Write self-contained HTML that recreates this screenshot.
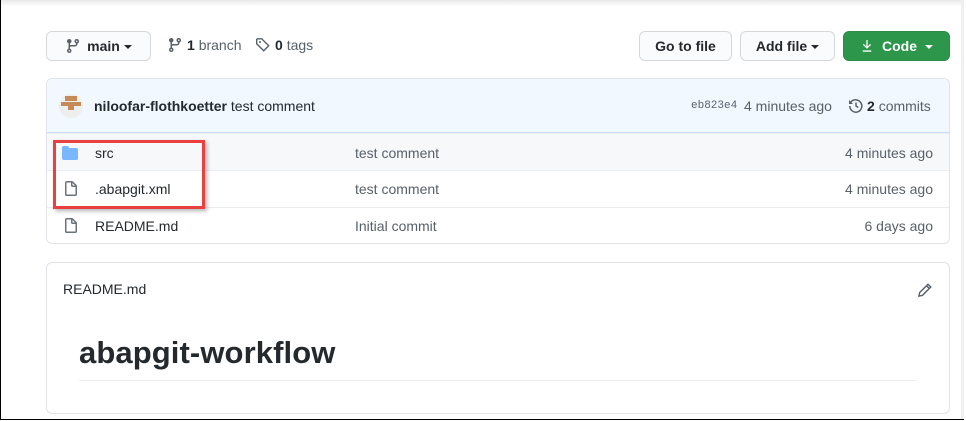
<!DOCTYPE html><html><head><style>
body{margin:0;width:966px;height:421px;overflow:hidden;font-family:"Liberation Sans",sans-serif;color:#24292e;font-size:14px;background:#fff;position:relative}
.frame{position:absolute;left:0;top:0;width:964px;height:420px;border-left:1px solid #000;border-bottom:1px solid #000;border-right:2px solid #000;box-sizing:border-box;background:linear-gradient(#e8e8e8,#fff 6px)}
.sb{position:absolute;right:2px;top:0;width:3px;height:419px;background:#f0f0f0}
.btn{position:absolute;top:31px;height:30px;border:1px solid #d5d8da;border-radius:6px;background:#fafbfc;box-sizing:border-box;font-weight:bold;font-size:14px;line-height:28px;text-align:center}
.a{position:absolute;white-space:nowrap}
.box{position:absolute;left:46px;top:78px;width:904px;height:166px;border:1px solid #e1e4e8;border-radius:6px;box-sizing:border-box;overflow:hidden}
.hd{height:53px;background:#f1f8ff;border-bottom:1px solid #c8e1ff}
.row{height:36px;border-top:1px solid #eaecef;position:relative}
.row:first-of-type{border-top:none}
.caret{display:inline-block;border:4px solid transparent;border-top-color:currentColor;border-bottom:0;vertical-align:middle;margin-left:4px}
.gray{color:#586069}
</style></head><body>
<div class="frame"></div><div class="sb"></div>
<div class="btn" style="left:46px;width:105px"><svg width="16" height="16" viewBox="0 0 16 16" style="vertical-align:-3px;margin-right:6px"><path fill="#586069" d="M11.75 2.5a.75.75 0 100 1.5.75.75 0 000-1.5zm-2.25.75a2.25 2.25 0 113 2.12V6A2.5 2.5 0 0110 8.5H6a1 1 0 00-1 1v1.130a2.25 2.25 0 11-1.5 0V5.37a2.25 2.25 0 111.5 0v1.84c.31-.14.65-.21 1-.21h4a1 1 0 001-1v-.63A2.25 2.25 0 019.5 3.25zM4.25 12a.75.75 0 100 1.5.75.75 0 000-1.5zM3.5 3.25a.75.75 0 111.5 0 .75.75 0 01-1.5 0z"/></svg>main<span class="caret"></span></div>
<div class="a" style="left:167px;top:37px"><svg width="16" height="16" viewBox="0 0 16 16" style="vertical-align:-3px;margin-right:4px"><path fill="#586069" d="M11.75 2.5a.75.75 0 100 1.5.75.75 0 000-1.5zm-2.25.75a2.25 2.25 0 113 2.12V6A2.5 2.5 0 0110 8.5H6a1 1 0 00-1 1v1.13a2.25 2.25 0 11-1.5 0V5.37a2.25 2.25 0 111.5 0v1.84c.31-.14.65-.21 1-.21h4a1 1 0 001-1v-.63A2.25 2.25 0 019.5 3.25zM4.25 12a.75.75 0 100 1.5.75.75 0 000-1.5zM3.5 3.25a.75.75 0 111.5 0 .75.75 0 01-1.5 0z"/></svg><b>1</b> <span class="gray">branch</span></div>
<div class="a" style="left:255px;top:37px"><svg width="16" height="16" viewBox="0 0 16 16" style="vertical-align:-3px;margin-right:4px"><path fill="none" stroke="#586069" stroke-width="1.4" d="M1.7 2.5v4.3l7 7 5-5-7-7H2.5z"/><circle cx="5" cy="5" r="1" fill="#586069"/></svg><b>0</b> <span class="gray">tags</span></div>
<div class="btn" style="left:639px;width:93px">Go to file</div>
<div class="btn" style="left:740px;width:95px">Add file<span class="caret"></span></div>
<div class="btn" style="left:843px;width:107px;background:#2c974b;border-color:#2a8c46;color:#fff"><svg width="14" height="14" viewBox="0 0 16 16" style="vertical-align:-2px;margin-right:8px"><path fill="#fff" d="M7.47 10.78a.75.75 0 001.06 0l3.75-3.750a.75.75 0 00-1.06-1.06L8.75 8.44V1.75a.75.75 0 00-1.5 0v6.69L4.78 5.97a.75.75 0 00-1.06 1.06l3.75 3.75zM3.75 13a.75.75 0 000 1.5h8.5a.75.75 0 000-1.5h-8.5z"/></svg>Code<span class="caret" style="margin-left:8px"></span></div>
<div class="box">
<div class="hd"></div>
<div class="row" style="background:#f6f8fa"></div><div class="row"></div><div class="row"></div>
</div>
<div class="a" style="left:59px;top:94px;width:24px;height:24px;border-radius:50%;background:#eee;overflow:hidden"><div style="position:absolute;left:6px;top:2px;width:12px;height:5px;background:#c58a55"></div><div style="position:absolute;left:2px;top:8px;width:20px;height:4px;background:#c58a55"></div><div style="position:absolute;left:9px;top:12px;width:6px;height:4px;background:#c58a55"></div></div>
<div class="a" style="left:94px;top:98px"><b>niloofar-flothkoetter</b> test comment</div>
<div class="a gray" style="left:691px;top:100px;font-family:'Liberation Mono',monospace;font-size:11px">eb823e4</div>
<div class="a gray" style="left:744px;top:98px">4 minutes ago</div>
<div class="a" style="left:848px;top:98px"><svg width="16" height="16" viewBox="0 0 16 16" style="vertical-align:-3px;margin-right:3px"><path fill="none" stroke="#586069" stroke-width="1.5" d="M2.5 4.5A6.2 6.2 0 118 14.2 6.2 6.2 0 011.8 8"/><path fill="#586069" d="M1 2v4h4z"/><path fill="none" stroke="#586069" stroke-width="1.5" d="M8 4.5V8l2.3 1.5"/></svg><b>2</b> <span class="gray">commits</span></div>
<svg class="a" style="left:62px;top:145px" width="16" height="16" viewBox="0 0 16 16"><path fill="#79b8ff" d="M1.75 1A1.75 1.75 0 000 2.75v10.5C0 14.22.78 15 1.750 15h12.5A1.75 1.75 0 0016 13.25v-8.5A1.75 1.75 0 0014.25 3H7.5a.25.25 0 01-.2-.1l-.9-1.2C6.07 1.26 5.55 1 5 1H1.75z"/></svg>
<svg class="a" style="left:63px;top:181px" width="16" height="16" viewBox="0 0 16 16"><path fill="#6a737d" d="M3.75 1.5a.25.25 0 00-.25.25v11.5c0 .14.11.25.25.25h8.5a.25.25 0 00.25-.25V6H9.75A1.75 1.75 0 018 4.25V1.5H3.75zm5.75.56v2.19c0 .14.11.25.25.25h2.19L9.5 2.06zM2 1.75C2 .78 2.780 0 3.75 0h5.09c.46 0 .9.18 1.23.51l3.42 3.42c.33.33.51.77.51 1.23v8.09A1.75 1.75 0 0112.25 15h-8.5A1.75 1.75 0 012 13.25V1.75z"/></svg>
<svg class="a" style="left:63px;top:218px" width="16" height="16" viewBox="0 0 16 16"><path fill="#6a737d" d="M3.75 1.5a.25.25 0 00-.25.25v11.5c0 .14.11.25.25.25h8.5a.25.25 0 00.25-.25V6H9.75A1.75 1.75 0 018 4.25V1.5H3.75zm5.75.56v2.19c0 .14.11.25.25.25h2.19L9.5 2.06zM2 1.75C2 .78 2.78 0 3.75 0h5.09c.46 0 .9.18 1.23.51l3.42 3.42c.33.33.51.77.51 1.23v8.09A1.75 1.75 0 0112.25 15h-8.5A1.75 1.75 0 012 13.25V1.75z"/></svg>
<div class="a" style="left:95px;top:145px">src</div>
<div class="a" style="left:95px;top:181px">.abapgit.xml</div>
<div class="a" style="left:95px;top:218px">README.md</div>
<div class="a gray" style="left:355px;top:145px">test comment</div>
<div class="a gray" style="left:355px;top:181px">test comment</div>
<div class="a gray" style="left:355px;top:218px">Initial commit</div>
<div class="a gray" style="right:33px;top:145px">4 minutes ago</div>
<div class="a gray" style="right:33px;top:181px">4 minutes ago</div>
<div class="a gray" style="right:33px;top:218px">6 days ago</div>
<div class="a" style="left:53px;top:140px;width:152px;height:69px;border:3px solid #e8413f;box-sizing:border-box;box-shadow:2px 2px 4px rgba(0,0,0,.3)"></div>
<div class="a" style="left:46px;top:262px;width:904px;height:152px;border:1px solid #e1e4e8;border-radius:6px;box-sizing:border-box"></div>
<div class="a" style="left:63px;top:281px">README.md</div>
<svg class="a" style="left:917px;top:282px" width="16" height="16" viewBox="0 0 16 16"><path fill="none" stroke="#586069" stroke-width="1.4" d="M11 2.2l2.8 2.8-8.3 8.3-3.6.8.8-3.6z M9.5 3.7l2.8 2.8"/></svg>
<div class="a" style="left:79px;top:335px;font-size:31px;font-weight:bold;letter-spacing:0.1px">abapgit-workflow</div>
<div class="a" style="left:79px;top:380px;width:837px;height:1px;background:#eaecef"></div>
</body></html>
